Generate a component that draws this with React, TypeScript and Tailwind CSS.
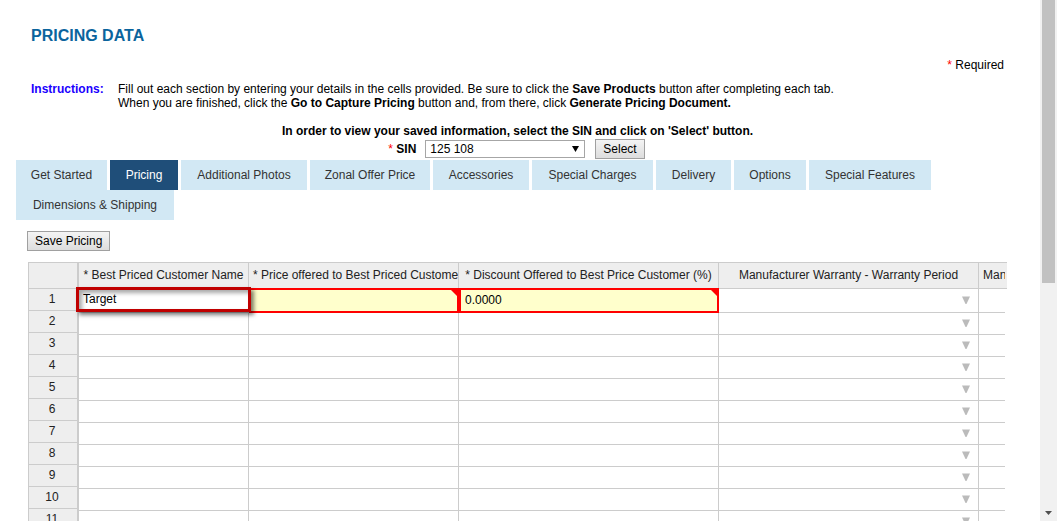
import { useState } from "react";

const tabs = [
  { label: "Get Started", width: "min-w-[91px]" },
  { label: "Pricing", width: "min-w-[68px]" },
  { label: "Additional Photos", width: "min-w-[126px]" },
  { label: "Zonal Offer Price", width: "min-w-[120px]" },
  { label: "Accessories", width: "min-w-[96px]" },
  { label: "Special Charges", width: "min-w-[121px]" },
  { label: "Delivery", width: "min-w-[75px]" },
  { label: "Options", width: "min-w-[72px]" },
  { label: "Special Features", width: "min-w-[122px]" },
  { label: "Dimensions & Shipping", width: "min-w-[158px]" },
];

const rows = Array.from({ length: 14 }, (_, i) => i + 1);

const buttonClass =
  "h-5 border border-[#a0a0a0] bg-linear-to-b from-[#f4f4f4] to-[#dddddd] px-[7px] text-[12px] leading-[17px] text-black";

const headClass =
  "h-[26px] overflow-hidden border-r border-b border-[#cccccc] bg-[#eeeeee] px-1 pt-0 pb-[2px] text-center font-normal whitespace-nowrap";

function ErrorCorner() {
  return (
    <svg className="absolute top-0 right-0 size-[6px]" viewBox="0 0 6 6" aria-hidden="true">
      <path d="M0 0H6V6Z" fill="#ff0000" />
    </svg>
  );
}

function WarrantyArrow() {
  return (
    <svg className="mr-2 ml-auto block h-2 w-2" viewBox="0 0 8 8" aria-hidden="true">
      <path d="M0 0.5H8L4.5 8H3.5Z" fill="#bbbbbb" />
    </svg>
  );
}

function PricingGrid() {
  const [customer, setCustomer] = useState("Target");
  const [price, setPrice] = useState("");
  const [discount, setDiscount] = useState("0.0000");

  return (
    <div className="mt-[11px] mr-[33px] ml-7 flex items-start text-[12px] leading-[14px] text-[#222222]">
      <table className="w-[51px] shrink-0 table-fixed border-separate border-spacing-0 border-t border-r-2 border-l border-[#cccccc] bg-[#eeeeee]">
        <thead>
          <tr>
            <th className="h-[26px] border-b border-[#cccccc] p-0" aria-label="Row" />
          </tr>
        </thead>
        <tbody>
          {rows.map((n) => (
            <tr key={n}>
              <th
                scope="row"
                className="h-[22px] border-b border-[#cccccc] p-0 pr-[2px] pb-[2px] text-center font-normal"
              >
                {n}
              </th>
            </tr>
          ))}
        </tbody>
      </table>
      <table className="w-full min-w-0 flex-1 table-fixed border-separate border-spacing-0 border-t border-[#cccccc]">
        <colgroup>
          <col className="w-[170px]" />
          <col className="w-[210px]" />
          <col className="w-[260px]" />
          <col className="w-[260px]" />
          <col />
        </colgroup>
        <thead>
          <tr>
            <th className={headClass}>* Best Priced Customer Name</th>
            <th className="h-[26px] overflow-hidden border-r border-b border-[#cccccc] bg-[#eeeeee] pb-[2px] pl-1 text-left font-normal whitespace-nowrap">
              * Price offered to Best Priced Customer
            </th>
            <th className={headClass}>* Discount Offered to Best Price Customer (%)</th>
            <th className={headClass}>Manufacturer Warranty - Warranty Period</th>
            <th className="h-[26px] border-b border-[#cccccc] bg-[#eeeeee] pr-[2px] pb-[2px] pl-1 text-left font-normal whitespace-nowrap">
              <div className="overflow-hidden">Manufacturer Warranty</div>
            </th>
          </tr>
        </thead>
        <tbody>
          <tr>
            <td className="relative h-6 border-r border-b border-[#cccccc] p-0">
              <div className="absolute -inset-x-[3px] -top-[2px] bottom-0 z-10 border-3 border-[#c00000] shadow-[3px_3px_4px_rgba(0,0,0,0.5),inset_3px_3px_4px_rgba(0,0,0,0.35)]">
                <input
                  aria-label="Best Priced Customer Name"
                  className="block h-[18px] w-full bg-transparent pl-1 text-black outline-none"
                  value={customer}
                  onChange={(e) => setCustomer(e.target.value)}
                />
              </div>
            </td>
            <td className="relative h-6 p-0">
              <div className="absolute inset-x-0 -top-px bottom-0 border-2 border-[#ff0000] bg-[#ffffcc]">
                <input
                  aria-label="Price offered to Best Priced Customer"
                  className="block h-5 w-full bg-transparent px-1 text-black outline-none"
                  value={price}
                  onChange={(e) => setPrice(e.target.value)}
                />
                <ErrorCorner />
              </div>
            </td>
            <td className="relative h-6 p-0">
              <div className="absolute inset-x-0 -top-px bottom-0 border-2 border-[#ff0000] bg-[#ffffcc]">
                <input
                  aria-label="Discount Offered to Best Price Customer"
                  className="block h-5 w-full bg-transparent px-1 text-black outline-none"
                  value={discount}
                  onChange={(e) => setDiscount(e.target.value)}
                />
                <ErrorCorner />
              </div>
            </td>
            <td className="h-6 border-r border-b border-[#cccccc] p-0 pb-[2px]">
              <WarrantyArrow />
            </td>
            <td className="h-6 p-0">
              <div className="mr-[2px] h-6 border-b border-[#cccccc]" />
            </td>
          </tr>
          {rows.slice(1).map((n) => (
            <tr key={n}>
              <td className="h-[22px] border-r border-b border-[#cccccc] p-0" />
              <td className="h-[22px] border-r border-b border-[#cccccc] p-0" />
              <td className="h-[22px] border-r border-b border-[#cccccc] p-0" />
              <td className="h-[22px] border-r border-b border-[#cccccc] p-0 pb-[2px]">
                <WarrantyArrow />
              </td>
              <td className="h-[22px] p-0">
                <div className="mr-[2px] h-[22px] border-b border-[#cccccc]" />
              </td>
            </tr>
          ))}
        </tbody>
      </table>
    </div>
  );
}

export default function App() {
  const [active, setActive] = useState("Pricing");

  return (
    <div className="flex h-screen overflow-hidden bg-white font-['Liberation_Sans',Arial,sans-serif] text-[12px] leading-[14px] text-black">
      <main className="min-w-0 flex-1 overflow-hidden">
        <h1 className="mt-[26px] ml-[31px] text-[16px] leading-5 font-bold text-[#0a649d]">PRICING DATA</h1>
        <p className="mt-3 mr-9 text-right">
          <span className="text-[#ff0000]">*</span> Required
        </p>
        <div className="mt-[10px] ml-[31px] flex">
          <strong className="w-[87px] shrink-0 text-[#1a00ff]">Instructions:</strong>
          <p>
            Fill out each section by entering your details in the cells provided. Be sure to click the{" "}
            <b>Save Products</b> button after completing each tab.
            <br />
            When you are finished, click the <b>Go to Capture Pricing</b> button and, from there, click{" "}
            <b>Generate Pricing Document.</b>
          </p>
        </div>
        <p className="mt-[14px] mr-[5px] text-center font-bold">
          In order to view your saved information, select the SIN and click on 'Select' button.
        </p>
        <form className="mt-px mr-[7px] flex items-center justify-center" onSubmit={(e) => e.preventDefault()}>
          <label htmlFor="sin" className="mr-[9px] font-bold">
            <span className="font-normal text-[#ff0000]">*</span> SIN
          </label>
          <div className="relative">
            <select
              id="sin"
              defaultValue="125 108"
              className="block h-[18px] w-40 appearance-none border border-[#a6a6a6] bg-white pl-1 text-[12px] leading-4"
            >
              <option>125 108</option>
            </select>
            <svg
              className="pointer-events-none absolute top-[6px] right-[6px] h-[6px] w-[7px]"
              viewBox="0 0 7 6"
              aria-hidden="true"
            >
              <path d="M0 0H7L3.5 6Z" fill="#000" />
            </svg>
          </div>
          <button type="submit" className={`${buttonClass} ml-[10px]`}>
            Select
          </button>
        </form>
        <nav className="mt-px mr-[33px] ml-4 flex flex-wrap gap-x-[3px]">
          {tabs.map(({ label, width }) => (
            <a
              key={label}
              href="#"
              onClick={(e) => {
                e.preventDefault();
                setActive(label);
              }}
              className={`px-[14px] py-2 text-center ${width} ${
                label === active ? "bg-[#1f4e79] text-white" : "bg-[#d2e8f4] text-[#333333]"
              }`}
            >
              {label}
            </a>
          ))}
        </nav>
        <button type="button" className={`${buttonClass} mt-[11px] ml-[27px] block`}>
          Save Pricing
        </button>
        <PricingGrid />
      </main>
      <div className="flex w-[17px] shrink-0 flex-col items-center justify-between bg-[#f1f1f1]" aria-hidden="true">
        <div className="h-[283px] w-[13px] bg-[#c1c1c1]" />
        <svg className="mb-[6px] h-1 w-[7px]" viewBox="0 0 7 4">
          <path d="M0 0H7L3.5 4Z" fill="#505050" />
        </svg>
      </div>
    </div>
  );
}
